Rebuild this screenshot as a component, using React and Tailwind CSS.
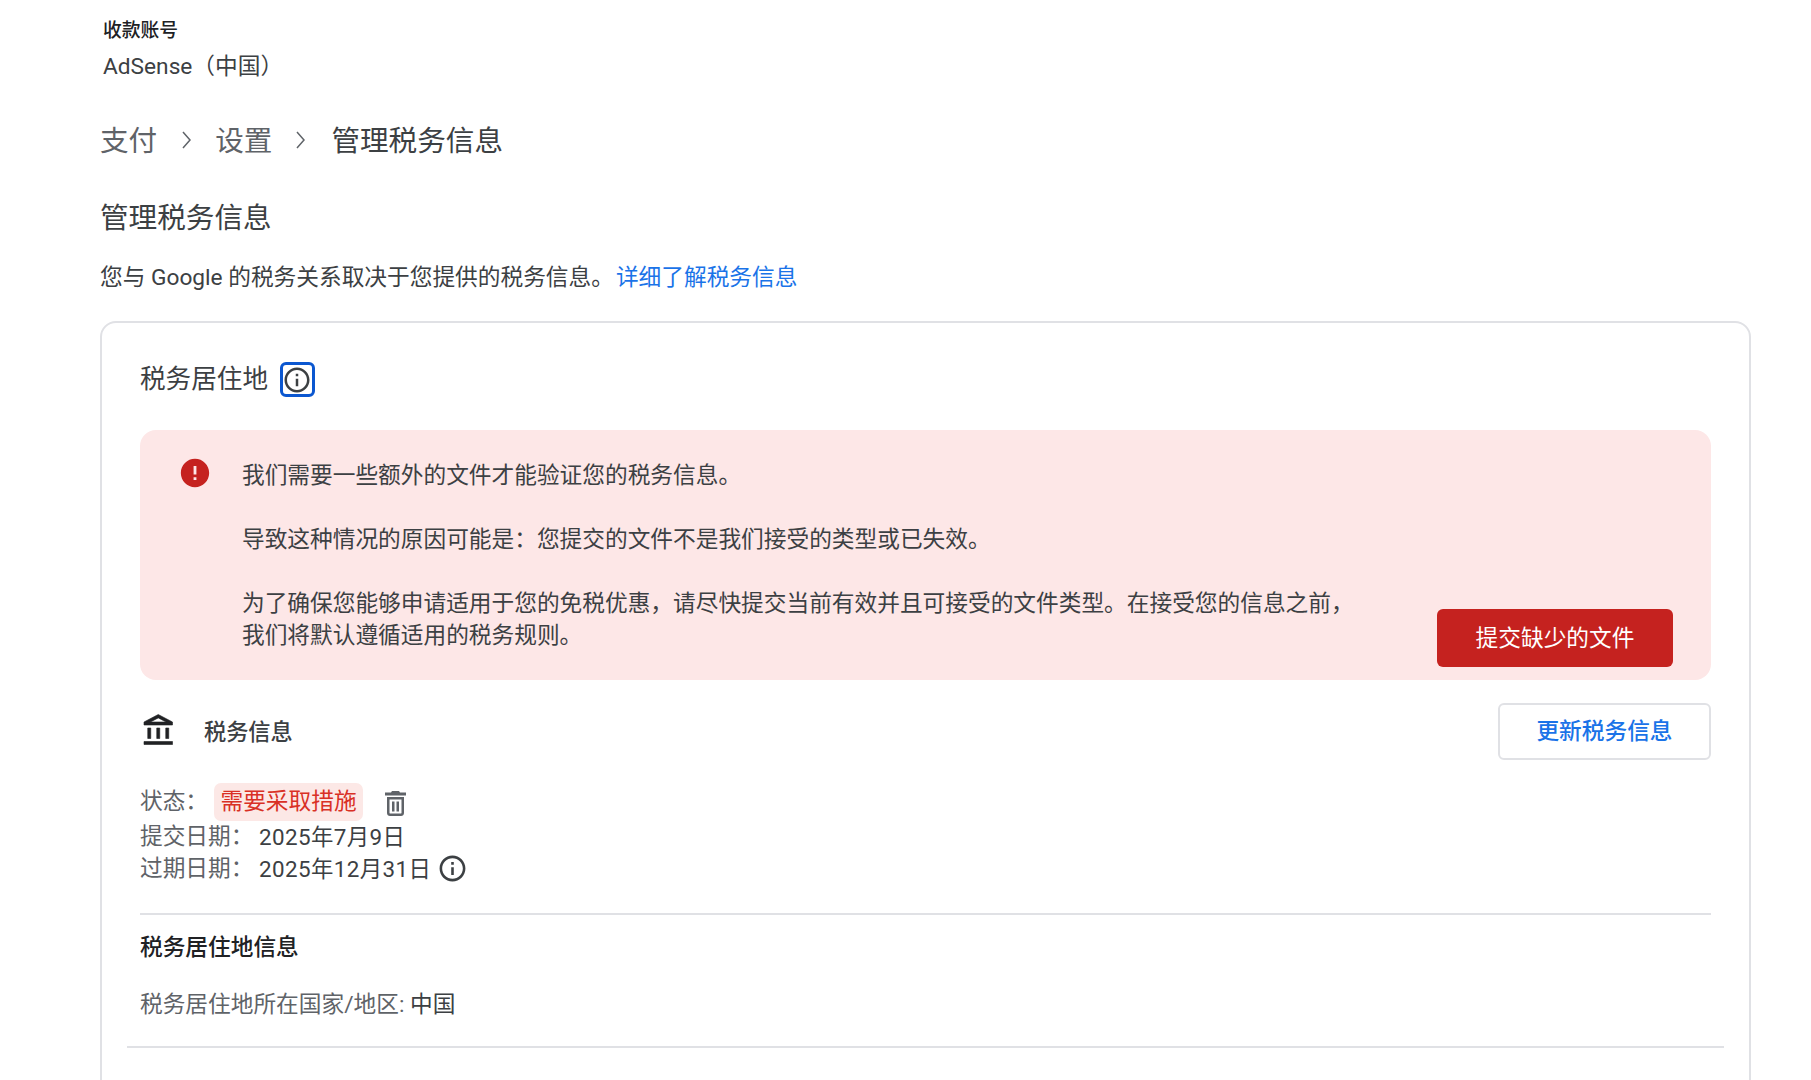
const INFO = "M11 7h2v2h-2zm0 4h2v6h-2zm1-9C6.48 2 2 6.48 2 12s4.48 10 10 10 10-4.48 10-10S17.52 2 12 2zm0 18c-4.41 0-8-3.59-8-8s3.59-8 8-8 8 3.59 8 8-3.59 8-8 8z";

function InfoIcon() {
  return (
    <svg viewBox="0 0 24 24" className="w-[31px] h-[31px] fill-[#3c4043]">
      <path d={INFO} />
    </svg>
  );
}

function Chevron() {
  return (
    <svg viewBox="0 0 12 20" className="w-[12px] h-[20px] fill-none stroke-[#5f6368] stroke-[1.5]">
      <path d="M2 2l7 8-7 8" />
    </svg>
  );
}

export default function App() {
  return (
    <div className="h-[1080px] overflow-hidden bg-white pl-[100px] pr-[60px] font-['Roboto','Noto_Sans_CJK_SC',sans-serif] text-[22.7px] text-[#3c4043]">
      <div className="pt-[20px] pl-[3px]">
        <div className="text-[18.8px] leading-[22px] font-medium text-[#202124]">收款账号</div>
        <div className="mt-[9px] leading-[32px] text-[#3c4043]">AdSense（中国）</div>
      </div>

      <nav className="mt-[38px] flex h-[40px] items-center text-[28.6px] leading-[40px] text-[#5f6368]">
        <span>支付</span>
        <span className="ml-[24px] mr-[22px] mt-[-2px] flex"><Chevron /></span>
        <span>设置</span>
        <span className="ml-[23px] mr-[24px] mt-[-2px] flex"><Chevron /></span>
        <span className="text-[#3c4043]">管理税务信息</span>
      </nav>

      <h1 className="mt-[37px] text-[28.6px] leading-[40px] font-normal text-[#3c4043]">管理税务信息</h1>

      <p className="mt-[24px] leading-[32px] text-[#3c4043]">
        您与 Google 的税务关系取决于您提供的税务信息。<span className="ml-[2px] text-[#1a73e8]">详细了解税务信息</span>
      </p>

      <section className="mt-[27px] h-[900px] rounded-t-[16px] border-2 border-[#e0e1e5] px-[38px] pt-[39px]">
        <div className="flex h-[35px] items-center">
          <h2 className="text-[25.6px] leading-[35px] font-normal text-[#3c4043]">税务居住地</h2>
          <span className="ml-[12px] flex h-[35px] w-[35px] items-center justify-center rounded-[6px] border-[3px] border-[#0b57d0]">
            <svg viewBox="0 0 24 24" className="h-[30px] w-[30px] shrink-0 fill-[#3c4043]">
              <path d={INFO} />
            </svg>
          </span>
        </div>

        <div className="mt-[33px] flex h-[250px] rounded-[16px] bg-[#fde7e7] pb-[13px] pl-[38px] pr-[38px] pt-[30px]">
          <svg viewBox="0 0 24 24" className="mt-[-4px] h-[34px] w-[34px] shrink-0 fill-[#c5221f]">
            <path d="M12 2C6.48 2 2 6.48 2 12s4.48 10 10 10 10-4.48 10-10S17.52 2 12 2zm1 15h-2v-2h2v2zm0-4h-2V7h2v6z" />
          </svg>
          <div className="ml-[30px] w-[1120px] leading-[32px] text-[#3c4043]">
            <p>我们需要一些额外的文件才能验证您的税务信息。</p>
            <p className="mt-[32px]">导致这种情况的原因可能是：您提交的文件不是我们接受的类型或已失效。</p>
            <p className="mt-[32px]">为了确保您能够申请适用于您的免税优惠，请尽快提交当前有效并且可接受的文件类型。在接受您的信息之前，<br />我们将默认遵循适用的税务规则。</p>
          </div>
          <button className="ml-auto h-[58px] w-[236px] self-end rounded-[6px] bg-[#c5221f] pt-[2px] text-white">提交缺少的文件</button>
        </div>

        <div className="mt-[23px] flex h-[57px] items-center justify-between">
          <div className="flex items-center">
            <svg viewBox="0 0 24 24" className="ml-[1px] mt-[-2px] h-[36px] w-[36px] fill-[#202124] stroke-[#202124] stroke-[0.4]">
              <path d="M6.5 10h-2v7h2v-7zm6 0h-2v7h2v-7zm8.5 9H2v2h19v-2zm-2.500-9h-2v7h2v-7zm-7-6.740L16.710 6H6.290l5.210-2.740m0-2.260L2 6v2h19V6l-9.500-5z" />
            </svg>
            <h3 className="ml-[27px] text-[22.2px] font-medium leading-[32px] text-[#3c4043]">税务信息</h3>
          </div>
          <button className="h-[57px] w-[213px] rounded-[6px] border-2 border-[#e0e1e5] pt-[2px] font-medium text-[#1a73e8]">更新税务信息</button>
        </div>

        <div className="mt-[23px] flex h-[38px] items-center">
          <span className="text-[#5f6368]">状态：</span>
          <span className="ml-[6px] flex h-[38px] w-[149px] items-center justify-center rounded-[7px] bg-[#fce8e6] text-[#d93025]">需要采取措施</span>
          <svg viewBox="0 0 21 25" className="ml-[22px] mt-[2px] h-[25px] w-[21px] fill-[#5f6368]">
            <path d="M7 0h7l1 1.500h6v3H0v-3h6zM2 6h17v16c0 1.700-1.300 3-3 3H5c-1.700 0-3-1.300-3-3zm2.500 2.500V22c0 .3.200.5.500.5h11c.3 0 .5-.2.5-.5V8.500zM7 10.500h2.500v10H7zm4.500 0H14v10h-2.500z" />
          </svg>
        </div>
        <div className="-mt-px flex h-[32px] items-center leading-[32px]">
          <span className="w-[119px] pt-[2px] text-[#5f6368]">提交日期：</span>
          <span className="pt-[2px] text-[22.4px] tracking-[0.4px] text-[#3c4043]">2025年7月9日</span>
        </div>
        <div className="flex h-[32px] items-center leading-[32px]">
          <span className="w-[119px] pt-[2px] text-[#5f6368]">过期日期：</span>
          <span className="pt-[2px] text-[22.4px] tracking-[0.4px] text-[#3c4043]">2025年12月31日</span>
          <span className="ml-[6px] flex"><InfoIcon /></span>
        </div>

        <hr className="mt-[29px] border-t-2 border-[#e0e1e5]" />

        <h3 className="mt-[17px] font-medium leading-[32px] text-[#202124]">税务居住地信息</h3>
        <p className="mt-[25px] leading-[32px] text-[#5f6368]">
          税务居住地所在国家/地区: <span className="text-[#3c4043]">中国</span>
        </p>

        <hr className="-mx-[13px] mt-[25px] border-t-2 border-[#e0e1e5]" />
      </section>
    </div>
  );
}
